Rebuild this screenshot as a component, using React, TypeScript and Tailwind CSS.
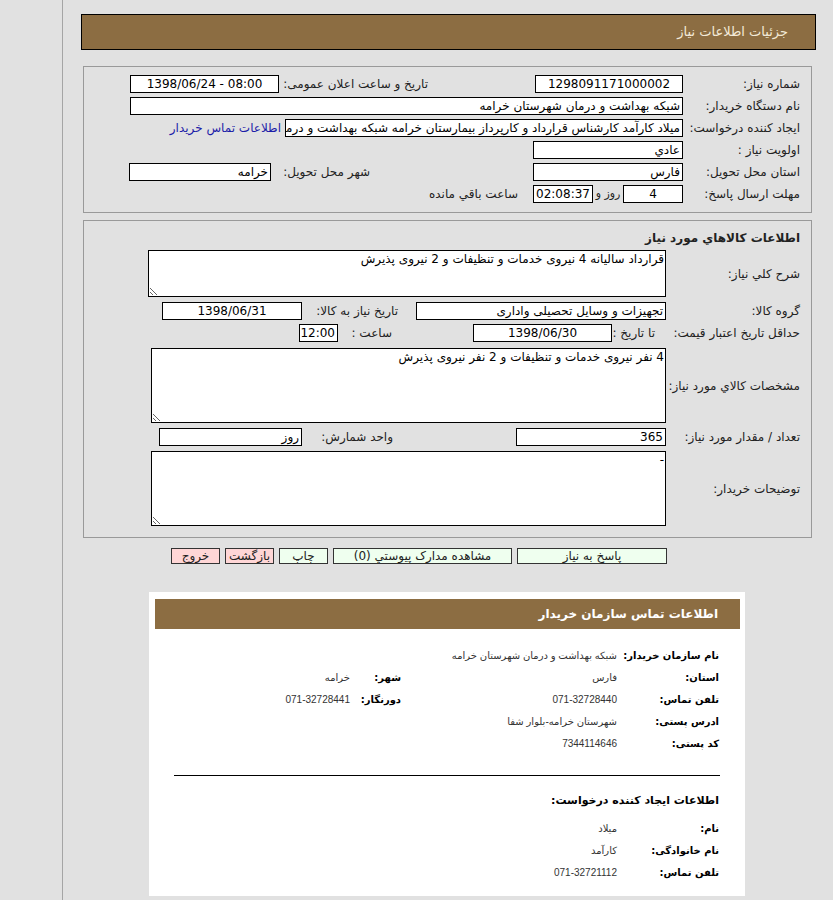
import React from 'react';

type FieldProps = {
  w: string;
  center?: boolean;
  ltr?: boolean;
  children?: React.ReactNode;
};

const Field: React.FC<FieldProps> = ({ w, center, ltr, children }) => (
  <div
    dir={ltr ? 'ltr' : undefined}
    className={`h-[18px] shrink-0 bg-white border border-black px-[2px] leading-[16px] whitespace-nowrap overflow-hidden text-black ${w} ${center ? 'text-center' : 'text-right'}`}
  >
    {children}
  </div>
);

const Area: React.FC<{ h: string; w: string; text: string }> = ({ h, w, text }) => (
  <textarea
    readOnly
    dir="rtl"
    value={text}
    className={`shrink-0 bg-white border border-black px-[1px] py-0 leading-[16px] text-black outline-none resize ${h} ${w}`}
  />
);

const Label: React.FC<{ w: string; children: React.ReactNode }> = ({ w, children }) => (
  <div className={`shrink-0 whitespace-nowrap ${w}`}>{children}</div>
);

const InfoRow: React.FC<{ label: string; value: string; label2?: string; value2?: string }> = ({
  label,
  value,
  label2,
  value2,
}) => (
  <div className="flex items-center h-[22px]">
    <div className="w-[102px] shrink-0 font-bold text-[10px] text-black whitespace-nowrap">{label}</div>
    <div className="w-[216px] shrink-0 font-['Liberation_Sans','DejaVu_Sans',sans-serif] text-[10px] text-[#333] whitespace-nowrap">
      {value}
    </div>
    {label2 && (
      <div className="w-[51px] shrink-0 font-bold text-[10px] text-black whitespace-nowrap">{label2}</div>
    )}
    {value2 && (
      <div className="font-['Liberation_Sans','DejaVu_Sans',sans-serif] text-[10px] text-[#333] whitespace-nowrap">
        {value2}
      </div>
    )}
  </div>
);

export default function App() {
  return (
    <div
      dir="rtl"
      className="min-h-screen bg-[#e1e1e1] font-['DejaVu_Sans',sans-serif] text-[12px] text-[#222] overflow-hidden"
    >
      <div className="ml-[62px] border-l border-[#a5a5a5] pt-[14px] min-h-[900px]">
        {/* page title */}
        <div className="mr-[17px] ml-[18px] h-[36px] border border-black bg-[#8c6d42] flex items-center pr-[27px] text-[13px] text-[#f3ead8]">
          جزئیات اطلاعات نیاز
        </div>

        {/* general info */}
        <div className="mt-[16px] ml-[20px] mr-[21px] border border-[#999] pt-[8px] pb-[9px] pr-[11px]">
          <div className="flex flex-col gap-[4px]">
            <div className="flex items-center">
              <Label w="w-[117px]">شماره نیاز:</Label>
              <Field w="w-[148px]" center>
                1298091171000002
              </Field>
              <div className="w-[107px] shrink-0" />
              <Label w="w-[149px]">تاریخ و ساعت اعلان عمومی:</Label>
              <Field w="w-[149px]" center ltr>
                1398/06/24 - 08:00
              </Field>
            </div>
            <div className="flex items-center">
              <Label w="w-[117px]">نام دستگاه خریدار:</Label>
              <Field w="w-[553px]">شبکه بهداشت و درمان شهرستان خرامه</Field>
            </div>
            <div className="flex items-center">
              <Label w="w-[117px]">ایجاد کننده درخواست:</Label>
              <Field w="w-[398px]">
                میلاد کارآمد کارشناس قرارداد و کارپرداز بیمارستان خرامه شبکه بهداشت و درما
              </Field>
              <a className="mr-[4px] whitespace-nowrap text-[#1c1ca8] cursor-pointer">اطلاعات تماس خریدار</a>
            </div>
            <div className="flex items-center">
              <Label w="w-[117px]">اولویت نیاز :</Label>
              <Field w="w-[150px]">عادي</Field>
            </div>
            <div className="flex items-center">
              <Label w="w-[117px]">استان محل تحویل:</Label>
              <Field w="w-[150px]">فارس</Field>
              <div className="w-[163px] shrink-0" />
              <Label w="w-[99px]">شهر محل تحویل:</Label>
              <Field w="w-[142px]">خرامه</Field>
            </div>
            <div className="flex items-center">
              <Label w="w-[117px]">مهلت ارسال پاسخ:</Label>
              <Field w="w-[60px]" center>
                4
              </Field>
              <div className="w-[30px] shrink-0 text-center text-[11px] whitespace-nowrap">روز و</div>
              <Field w="w-[60px]" center>
                02:08:37
              </Field>
              <div className="mr-[15px] whitespace-nowrap">ساعت باقي مانده</div>
            </div>
          </div>
        </div>

        {/* goods info */}
        <div className="mt-[7px] ml-[20px] mr-[21px] border border-[#999] pt-[8px] pb-[11px] pr-[11px]">
          <div className="h-[18px] leading-[18px] font-bold mb-[3px]">اطلاعات كالاهاي مورد نياز</div>

          <div className="flex items-center">
            <Label w="w-[134px]">شرح کلي نیاز:</Label>
            <Area h="h-[47px]" w="w-[518px]" text="قرارداد سالیانه 4 نیروی خدمات و تنظیفات و 2 نیروی پذیرش" />
          </div>

          <div className="flex items-center mt-[5px]">
            <Label w="w-[134px]">گروه کالا:</Label>
            <Field w="w-[250px]">تجهیزات و وسایل تحصیلی واداری</Field>
            <div className="w-[18px] shrink-0" />
            <Label w="w-[96px]">تاریخ نیاز به کالا:</Label>
            <Field w="w-[140px]" center>
              1398/06/31
            </Field>
          </div>

          <div className="flex items-center mt-[4px]">
            <Label w="w-[134px]">حداقل تاریخ اعتبار قیمت:</Label>
            <div className="w-[54px] shrink-0 pr-[11px] whitespace-nowrap">تا تاریخ :</div>
            <Field w="w-[139px]" center>
              1398/06/30
            </Field>
            <div className="w-[81px] shrink-0" />
            <div className="w-[54px] shrink-0 whitespace-nowrap">ساعت :</div>
            <Field w="w-[39px]" center>
              12:00
            </Field>
          </div>

          <div className="flex items-center mt-[6px]">
            <Label w="w-[134px]">مشخصات كالاي مورد نياز:</Label>
            <Area h="h-[75px]" w="w-[515px]" text="4 نفر نیروی خدمات و تنظیفات و 2 نفر نیروی پذیرش" />
          </div>

          <div className="flex items-center mt-[5px]">
            <Label w="w-[134px]">تعداد / مقدار مورد نیاز:</Label>
            <Field w="w-[150px]">365</Field>
            <div className="w-[123px] shrink-0" />
            <Label w="w-[91px]">واحد شمارش:</Label>
            <Field w="w-[143px]">روز</Field>
          </div>

          <div className="flex items-center mt-[5px]">
            <Label w="w-[134px]">توضیحات خریدار:</Label>
            <Area h="h-[75px]" w="w-[515px]" text="-" />
          </div>
        </div>

        {/* actions */}
        <div className="flex items-center gap-[5px] mt-[10px] mr-[166px]">
          <button className="w-[150px] h-[16px] leading-[14px] border border-[#333] bg-[#efffef] text-[12px] text-[#222]">
            پاسخ به نیاز
          </button>
          <button className="w-[179px] h-[16px] leading-[14px] border border-[#333] bg-[#efffef] text-[12px] text-[#222]">
            مشاهده مدارک پیوستي (0)
          </button>
          <button className="w-[49px] h-[16px] leading-[14px] border border-[#333] bg-[#efffef] text-[12px] text-[#222]">
            چاپ
          </button>
          <button className="w-[49px] h-[16px] leading-[14px] border border-[#333] bg-[#ffd6d6] text-[12px] text-[#222]">
            بازگشت
          </button>
          <button className="w-[49px] h-[16px] leading-[14px] border border-[#333] bg-[#ffd6d6] text-[12px] text-[#222]">
            خروج
          </button>
        </div>

        {/* buyer contact card */}
        <div className="mt-[28px] mr-[88px] w-[596px] bg-white pt-[7px] pl-[6px] pr-[5px] pb-[13px]">
          <div className="h-[30px] bg-[#8c6d42] flex items-center pr-[22px] font-bold text-[12px] text-white">
            اطلاعات تماس سازمان خریدار
          </div>
          <div className="pr-[21px] mt-[15px]">
            <InfoRow label="نام سازمان خریدار:" value="شبکه بهداشت و درمان شهرستان خرامه" />
            <InfoRow label="استان:" value="فارس" label2="شهر:" value2="خرامه" />
            <InfoRow label="تلفن تماس:" value="071-32728440" label2="دورنگار:" value2="071-32728441" />
            <InfoRow label="ادرس پستی:" value="شهرستان خرامه-بلوار شفا" />
            <InfoRow label="کد پستی:" value="7344114646" />
          </div>
          <div className="mt-[21px] mr-[20px] ml-[19px] border-t border-black" />
          <div className="pr-[21px] mt-[17px] font-bold text-[11px] text-black h-[16px] leading-[16px]">
            اطلاعات ایجاد کننده درخواست:
          </div>
          <div className="pr-[21px] mt-[8px]">
            <InfoRow label="نام:" value="میلاد" />
            <InfoRow label="نام خانوادگی:" value="کارآمد" />
            <InfoRow label="تلفن تماس:" value="071-32721112" />
          </div>
        </div>
      </div>
    </div>
  );
}
